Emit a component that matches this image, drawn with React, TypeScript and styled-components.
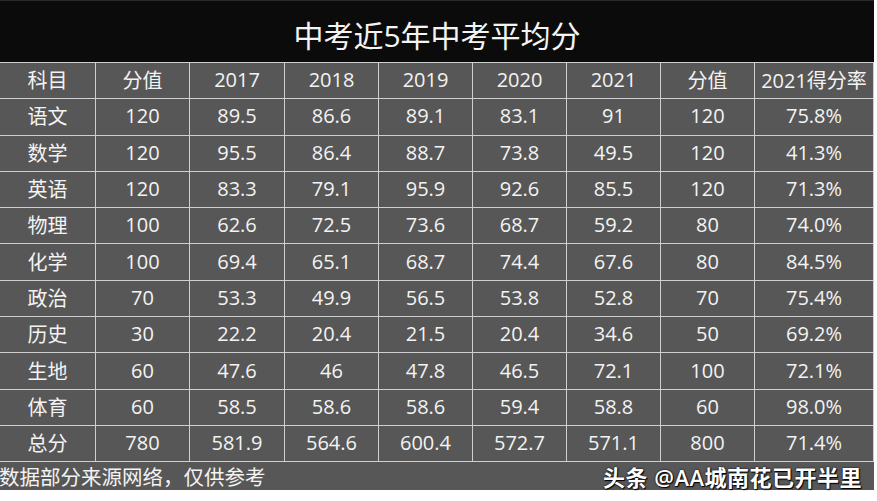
import React from "react";
import styled, { createGlobalStyle } from "styled-components";

const GlobalStyle = createGlobalStyle`
  html, body {
    margin: 0;
    padding: 0;
    background: #ffffff;
  }
  body {
    font-family: "Open Sans", "Noto Sans CJK SC", sans-serif;
  }
`;

const Page = styled.div`
  width: 877px;
  height: 501px;
  display: flex;
  flex-direction: column;
  background: #ffffff;
  overflow: hidden;
`;

const Board = styled.div`
  width: 874px;
  display: flex;
  flex-direction: column;
  background: #575757;
`;

const TitleBar = styled.div`
  height: 62px;
  display: flex;
  align-items: center;
  justify-content: center;
  background: #0b0b0b;
  border-top: 1px solid #2a2a2a;
  box-sizing: border-box;
  color: #f4f4f4;
  font-family: "Open Sans", "Noto Sans CJK SC", sans-serif;
  font-size: 30px;
  padding-top: 4px;
`;

const Grid = styled.div`
  display: grid;
  grid-template-columns: 95px 94px 95px 94px 94px 94px 94px 94px 120px;
  grid-auto-rows: 36.3px;
  background: #575757;
`;

const Cell = styled.div<{ $last?: boolean }>`
  display: flex;
  align-items: center;
  justify-content: center;
  color: #f3f3f3;
  font-size: 20px;
  white-space: nowrap;
  border-left: 1px solid #cfcfcf;
  border-top: 1px solid #cfcfcf;
  border-right: ${(p) => (p.$last ? "1px solid #cfcfcf" : "none")};
  box-sizing: border-box;
  padding-bottom: 2px;
  &:nth-child(9n + 1) {
    border-left: none;
  }
`;

const Footer = styled.div`
  height: 29px;
  display: flex;
  align-items: center;
  justify-content: space-between;
  border-top: 1px solid #cfcfcf;
  box-sizing: border-box;
  padding-right: 12px;
  font-family: "Open Sans", "Noto Sans CJK SC", sans-serif;
  font-size: 20.5px;
  color: #f3f3f3;
`;

const Note = styled.span`
  margin-left: -1px;
`;

const Credit = styled.span`
  font-size: 22px;
  letter-spacing: 0.5px;
  font-weight: 600;
  color: #ffffff;
  text-shadow: 1px 1px 1px #000, 0 0 2px #000;
`;

const header = ["科目", "分值", "2017", "2018", "2019", "2020", "2021", "分值", "2021得分率"];

const rows: string[][] = [
  ["语文", "120", "89.5", "86.6", "89.1", "83.1", "91", "120", "75.8%"],
  ["数学", "120", "95.5", "86.4", "88.7", "73.8", "49.5", "120", "41.3%"],
  ["英语", "120", "83.3", "79.1", "95.9", "92.6", "85.5", "120", "71.3%"],
  ["物理", "100", "62.6", "72.5", "73.6", "68.7", "59.2", "80", "74.0%"],
  ["化学", "100", "69.4", "65.1", "68.7", "74.4", "67.6", "80", "84.5%"],
  ["政治", "70", "53.3", "49.9", "56.5", "53.8", "52.8", "70", "75.4%"],
  ["历史", "30", "22.2", "20.4", "21.5", "20.4", "34.6", "50", "69.2%"],
  ["生地", "60", "47.6", "46", "47.8", "46.5", "72.1", "100", "72.1%"],
  ["体育", "60", "58.5", "58.6", "58.6", "59.4", "58.8", "60", "98.0%"],
  ["总分", "780", "581.9", "564.6", "600.4", "572.7", "571.1", "800", "71.4%"],
];

export default function App() {
  return (
    <Page>
      <GlobalStyle />
      <Board>
        <TitleBar>中考近5年中考平均分</TitleBar>
        <Grid>
          {[header, ...rows].map((row, r) =>
            row.map((text, c) => (
              <Cell key={`${r}-${c}`} $last={c === 8}>
                {text}
              </Cell>
            ))
          )}
        </Grid>
        <Footer>
          <Note>数据部分来源网络，仅供参考</Note>
          <Credit>头条 @AA城南花已开半里</Credit>
        </Footer>
      </Board>
    </Page>
  );
}
